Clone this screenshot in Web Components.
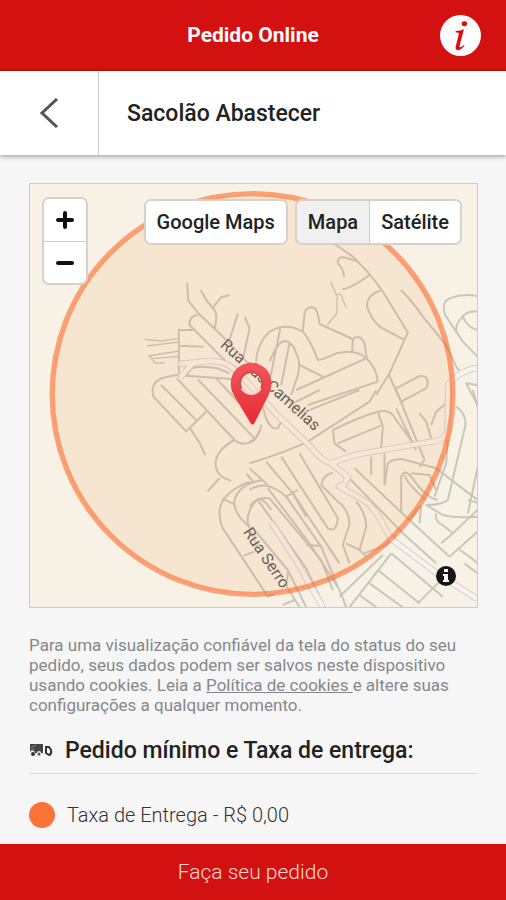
<!DOCTYPE html>
<html lang="pt-BR">
<head>
<meta charset="utf-8">
<meta name="viewport" content="width=device-width, initial-scale=1">
<title>Pedido Online</title>
<style>
  body {
    margin: 0;
    background: #f6f6f6;
    color: #222;
    font-family: Roboto, "Liberation Sans", sans-serif;
  }
</style>
</head>
<body>
<order-page>
  <app-header slot="header">Pedido Online</app-header>
  <store-bar slot="header">Sacolão Abastecer</store-bar>
  <delivery-map></delivery-map>
  <cookie-note></cookie-note>
  <fee-section>
    <span slot="title">Pedido mínimo e Taxa de entrega:</span>
    <fee-item>Taxa de Entrega - R$ 0,00</fee-item>
  </fee-section>
  <order-button slot="footer">Faça seu pedido</order-button>
</order-page>

<script>
class BaseElement extends HTMLElement {
  constructor() {
    super();
    this.attachShadow({ mode: "open" });
  }

  connectedCallback() {
    this.shadowRoot.innerHTML = this.template();
  }
}

class OrderPage extends BaseElement {
  template() {
    return `
      <style>
        :host {
          display: flex;
          flex-direction: column;
          min-height: 100vh;
        }
        main {
          flex: 1;
          padding: 28px 28px 12px 29px;
        }
        footer {
          position: sticky;
          bottom: 0;
        }
      </style>
      <header><slot name="header"></slot></header>
      <main><slot></slot></main>
      <footer><slot name="footer"></slot></footer>
    `;
  }
}

class AppHeader extends BaseElement {
  template() {
    return `
      <style>
        :host {
          display: grid;
          grid-template-columns: 1fr auto 1fr;
          align-items: center;
          height: 70px;
          padding: 0 25px;
          background: #d31110;
          border-bottom: 1px solid #b00c0c;
          color: #fff;
        }
        h1 {
          grid-column: 2;
          margin: 0;
          font-size: 21px;
          font-weight: 700;
        }
        button {
          justify-self: end;
          display: block;
          padding: 0;
          border: 0;
          background: none;
          cursor: pointer;
        }
        svg {
          display: block;
        }
      </style>
      <h1><slot></slot></h1>
      <button type="button" aria-label="Informações">
        <svg width="41" height="41" viewBox="0 0 42 42">
          <circle cx="21" cy="21" r="21" fill="#fff"/>
          <ellipse cx="25" cy="9" rx="2.800" ry="2.500" fill="#d31110"/>
          <path d="M16 16.500q5-.5 8.500-2l-4.300 16.500q-.5 2.300.8 2 1.500-.5 3.400-2.300l.8.900q-3.600 4.300-6.600 4.400-3.400 0-2.500-3.800l3-11.700q.6-2.300-.9-2.500l-2.300-.2z" fill="#d31110"/>
        </svg>
      </button>
    `;
  }
}

class StoreBar extends BaseElement {
  template() {
    return `
      <style>
        :host {
          position: relative;
          display: flex;
          height: 84px;
          background: #fff;
          box-shadow: 0 2px 4px rgba(0, 0, 0, 0.3);
        }
        button {
          display: grid;
          place-items: center;
          width: 99px;
          padding: 0;
          border: 0;
          border-right: 1px solid #ccc;
          background: none;
          cursor: pointer;
        }
        h2 {
          align-self: center;
          margin: 0 28px;
          font-size: 23px;
          font-weight: 500;
        }
      </style>
      <button type="button" aria-label="Voltar">
        <svg width="20" height="30" viewBox="0 0 20 30">
          <path d="M18 1L3 15L18 29" fill="none" stroke="#555" stroke-width="3"/>
        </svg>
      </button>
      <h2><slot></slot></h2>
    `;
  }
}

class DeliveryMap extends BaseElement {
  template() {
    return `
      <style>
        :host {
          position: relative;
          display: block;
          height: 423px;
          overflow: hidden;
          border: 1px solid #ccc;
          background: #f7f2e5;
        }
        .streets {
          display: block;
          width: 100%;
          height: 100%;
        }
        .minor {
          fill: none;
          stroke: #c9c6be;
          stroke-width: 6;
          stroke-linejoin: round;
        }
        .casing, .avenue {
          fill: none;
          stroke: #d3cbc6;
          stroke-width: 19;
          stroke-linejoin: round;
        }
        .avenue {
          stroke: #f8f2f0;
          stroke-width: 14;
        }
        text {
          fill: #6b6054;
          stroke: #f6e6d6;
          stroke-width: 4;
          paint-order: stroke;
          font-size: 48px;
        }
        button {
          box-sizing: border-box;
          padding: 0 11px;
          border: 0;
          background: #fff;
          color: #222;
          font: 500 20px Roboto, "Liberation Sans", sans-serif;
          cursor: pointer;
        }
        .zoom, .group {
          display: flex;
          overflow: hidden;
          border: 2px solid #d6d1c9;
          border-radius: 7px;
        }
        .zoom {
          position: absolute;
          top: 13px;
          left: 12px;
          flex-direction: column;
        }
        .zoom button {
          display: grid;
          place-items: center;
          width: 42px;
          height: 42px;
          padding: 0;
        }
        .zoom button + button {
          border-top: 1px solid #ccc;
        }
        .types {
          position: absolute;
          top: 15px;
          right: 15px;
          display: flex;
          gap: 7px;
        }
        .group button {
          height: 42px;
        }
        .group button + button {
          border-left: 1px solid #ccc;
        }
        button[aria-pressed="true"] {
          background: #f0f0f0;
        }
        .about {
          position: absolute;
          right: 20px;
          bottom: 20px;
          padding: 0;
          background: none;
        }
        button svg {
          display: block;
        }
      </style>
      <svg class="streets" viewBox="0 0 1344 1269" preserveAspectRatio="xMidYMid slice">
        <defs>
          <linearGradient id="pin" x1="0" y1="0" x2="0" y2="1">
            <stop offset="0" stop-color="#f2575a"/>
            <stop offset="1" stop-color="#e62a32"/>
          </linearGradient>
          <!-- avenues are drawn twice: wide casing, then a light centre -->
          <g id="avenues">
            <path d="M452 580L485 543Q510 526 572 534Q600 538 640 580L740 690L845 790Q875 830 905 838L955 880L945 900L928 907L1005 950Q1035 970 1065 1030L1085 1065L1225 1170L1344 1245"/>
            <path d="M905 838Q960 815 1000 808L1200 774Q1250 770 1254 740L1257 600L1290 570L1325 555L1344 552"/>
            <path d="M725 1015L800 1130L880 1269"/>
            <path d="M448 540L500 535"/>
          </g>
        </defs>

        <!-- north west -->
        <g class="minor" transform="translate(330 228)">
          <path d="M143 68L146 122L175 158L255 235L340 325"/>
          <path d="M184 90L200 120L225 150Q235 165 226 205"/>
          <path d="M220 142L245 112L270 106"/>
          <path d="M175 165Q148 168 150 195L290 335"/>
          <path d="M160 210H118V350M120 257L192 260"/>
          <path d="M15 238L65 243L118 236M22 258L118 246M118 273L28 288L48 310L75 309M35 296L118 289" stroke-width="4"/>
          <path d="M295 160L270 240M316 170L330 205L312 290"/>
          <path d="M140 350L155 325Q175 315 235 325L270 340"/>
          <path d="M40 400Q35 370 65 355L110 345L285 358"/>
        </g>
        <g class="minor" transform="translate(-30 618)">
          <path d="M400 10L402 20L500 124L560 65"/>
          <path d="M425 -15L530 90M472 -35L645 150Q672 172 705 150L722 120"/>
          <path d="M535 -32L705 145M590 -35L660 40"/>
          <path d="M512 115L540 158L557 195"/>
          <path d="M645 150Q590 180 588 220Q588 260 635 272M600 264L564 305"/>
          <path d="M680 250L705 280M608 325L645 343M672 497L705 485"/>
        </g>

        <!-- north -->
        <g class="minor" transform="translate(660 -27)">
          <path d="M255 207L310 245L360 297L397 345L475 472L465 495L420 595L380 660"/>
          <path d="M283 307Q285 285 265 265Q262 245 285 247L320 258"/>
          <path d="M278 342Q300 343 360 300"/>
          <path d="M397 345Q350 360 353 395Q365 435 395 458L465 495"/>
          <path d="M243 320L263 365L262 415L233 450M262 360Q275 350 280 375L291 398" stroke-width="4"/>
          <path d="M20 560Q20 510 60 470Q110 440 160 470Q185 500 205 555Q220 555 260 535Q320 520 350 550Q380 575 385 620"/>
          <path d="M160 470L165 415Q170 395 190 397Q205 400 210 447L310 492L308 530"/>
          <path d="M310 492Q330 475 345 505L352 550"/>
          <path d="M92 462L60 620M60 560Q85 500 105 498Q130 500 140 535Q155 560 145 600L125 660M120 505L95 630"/>
          <path d="M150 570L220 605M140 645L350 550M175 690L385 620"/>
          <path d="M454 345Q490 380 520 425L590 510L620 575"/>
          <path d="M684 363Q640 355 600 370Q575 380 587 420L640 500L684 545"/>
          <path d="M684 410Q650 405 635 430Q615 450 622 475M640 425Q655 460 684 465"/>
          <path d="M418 600L460 690M440 640L510 603Q535 600 535 625L530 640L455 680"/>
          <path d="M620 575L640 600M684 630L650 625L684 690"/>
        </g>

        <!-- south and east -->
        <g class="minor" transform="translate(660 618)">
          <path d="M380 0L360 35L175 155Q100 190 0 220M95 0L130 45M130 40L210 0"/>
          <path d="M155 70L330 0"/>
          <path d="M440 0L525 210L510 230M440 55L500 180"/>
          <path d="M250 120Q330 80 385 65Q425 55 440 90L492 160"/>
          <path d="M250 120L255 160L290 185M265 160L395 107M385 65L400 110L395 175"/>
          <path d="M510 70L530 95L545 145M545 105L560 65L590 40"/>
          <path d="M365 200V255M405 190V285"/>
          <path d="M40 50Q55 120 85 115L95 95M0 155Q30 145 35 105"/>

          <path d="M0 300Q50 265 110 320L215 470L265 590"/>
          <path d="M0 350Q20 320 60 325L215 510L250 600"/>
          <path d="M50 215L130 310L270 520M0 235L55 285"/>
          <path d="M95 200L235 415Q260 430 265 385L150 190M110 320L145 300"/>
          <path d="M170 465L215 468M130 310L170 380"/>
          <path d="M215 285Q220 255 250 248M215 285L265 335Q300 360 300 405Q290 430 280 465L300 520"/>
          <path d="M320 335Q350 370 350 410L330 480L290 460M330 480L350 500"/>
          <path d="M315 235L480 390L600 500M300 265L455 425L560 520"/>
          <path d="M405 285L415 220Q430 205 460 208L560 235L684 330"/>
          <path d="M455 370V260Q465 235 485 260Q530 325 565 330M465 255Q475 285 530 330"/>
          <path d="M485 250L540 255L560 300M515 345L510 400"/>
          <path d="M620 50Q650 70 648 105L595 330Q575 345 530 345L580 375Q620 385 684 380"/>
          <path d="M595 150L590 220L555 320M684 235L655 370M655 330L684 338M684 50L670 0"/>
          <path d="M560 370Q555 395 580 405L610 430L575 460M610 430L684 360"/>
          <path d="M480 390L510 350M600 500L684 425M630 480L660 500L684 520"/>
          <path d="M645 520L684 550M505 640L570 575"/>
          <path d="M425 490L300 652M400 495L270 620M425 490L580 620M385 540L510 640M360 580L460 652M330 615L380 652"/>
          <path d="M345 490L410 465L440 435"/>
        </g>
        <g class="minor" transform="translate(510 918)">
          <path d="M150 -25Q60 10 60 70Q62 110 80 130L205 320L225 312"/>
          <path d="M150 110Q100 70 105 30Q120 -20 190 -30"/>
          <path d="M175 170L145 100Q140 60 175 28Q190 20 215 60"/>
          <path d="M175 30L260 150L320 235L375 351M165 120L265 240L320 351"/>
          <path d="M265 240L262 290L300 351M250 345L285 330"/>
          <path d="M205 -5L330 160L420 300L440 351"/>
        </g>

        <use href="#avenues" class="casing"/>
        <use href="#avenues" class="avenue"/>
        <circle cx="669" cy="630" r="601" fill="#f4731f" fill-opacity=".1" stroke="#ff6a2a" stroke-opacity=".6" stroke-width="16"/>

        <text transform="translate(570 486) rotate(42)">Rua das Camelias</text>
        <text transform="translate(640 1044) rotate(56)">Rua Serro</text>

        <path d="M663 717L613 634Q602 614 604 597A61 61 0 0 1 726 597Q726 614 717 634L675 717Q669 726 663 717zM665 567A31 31 0 1 0 665 629A31 31 0 1 0 665 567z" fill="url(#pin)" fill-rule="evenodd"/>
        <circle cx="665" cy="598" r="34" fill="none" stroke="#d9454a" stroke-width="5"/>
        <path d="M638 612A31 31 0 0 0 692 612" fill="none" stroke="#fbd5d2" stroke-width="10"/>
      </svg>

      <div class="zoom">
        <button type="button" aria-label="Aumentar zoom">
          <svg width="18" height="18" viewBox="0 0 18 18"><path d="M9 2V16M2 9H16" stroke="#111" stroke-width="4" stroke-linecap="round"/></svg>
        </button>
        <button type="button" aria-label="Diminuir zoom">
          <svg width="18" height="18" viewBox="0 0 18 18"><path d="M2 9H16" stroke="#111" stroke-width="4" stroke-linecap="round"/></svg>
        </button>
      </div>
      <div class="types">
        <div class="group"><button type="button">Google Maps</button></div>
        <div class="group">
          <button type="button" aria-pressed="true">Mapa</button>
          <button type="button" aria-pressed="false">Satélite</button>
        </div>
      </div>
      <button class="about" type="button" aria-label="Sobre o mapa">
        <svg width="22" height="22" viewBox="0 0 22 22">
          <circle cx="11" cy="11" r="10" fill="#161616"/>
          <path d="M9 4H13V7H9zM8 9H13V15H14V17H8V15H9V11H8z" fill="#fff"/>
        </svg>
      </button>
    `;
  }
}

class CookieNote extends BaseElement {
  template() {
    return `
      <style>
        :host {
          display: block;
          margin-top: 27px;
          color: #85888b;
          font-size: 17px;
          line-height: 20px;
        }
        p {
          margin: 0;
        }
        a {
          color: inherit;
        }
      </style>
      <p>Para uma visualização confiável da tela do status do seu pedido, seus dados podem ser salvos neste dispositivo usando cookies. Leia a <a href="#cookies">Política de cookies </a>e altere suas configurações a qualquer momento.</p>
    `;
  }
}

class FeeSection extends BaseElement {
  template() {
    return `
      <style>
        :host {
          display: block;
          margin-top: 16px;
        }
        h3 {
          display: flex;
          align-items: center;
          gap: 12px;
          height: 38px;
          margin: 0 0 28px;
          padding-bottom: 4px;
          border-bottom: 1px solid #d8d8d8;
          font-size: 23px;
          font-weight: 500;
        }
      </style>
      <h3>
        <svg width="24" height="14" viewBox="0 0 24 14">
          <path d="M1 1H14V10H12A2 2 0 0 0 8 10H6A2 2 0 0 0 1 10z" fill="#444"/>
          <path d="M2 5L7 2M1 8L5 6" stroke="#888" stroke-width="1"/>
          <circle cx="4" cy="11" r="2" fill="#333"/>
          <circle cx="10" cy="11" r="1.500" fill="#555"/>
          <path d="M17 4V10L20 12Q23 11 22 7L20 4z" fill="none" stroke="#333" stroke-width="2"/>
        </svg>
        <slot name="title"></slot>
      </h3>
      <slot></slot>
    `;
  }
}

class FeeItem extends BaseElement {
  template() {
    return `
      <style>
        :host {
          display: flex;
          align-items: center;
          gap: 12px;
          color: #333;
          font-size: 20px;
          font-weight: 300;
        }
        i {
          width: 26px;
          height: 26px;
          border-radius: 50%;
          background: #fc7337;
        }
      </style>
      <i></i>
      <span><slot></slot></span>
    `;
  }
}

class OrderButton extends BaseElement {
  template() {
    return `
      <style>
        :host {
          display: block;
        }
        button {
          display: block;
          width: 100%;
          height: 56px;
          padding: 0;
          border: 0;
          background: #d31110;
          color: #fbd9d5;
          font: 300 21px Roboto, "Liberation Sans", sans-serif;
          cursor: pointer;
        }
      </style>
      <button type="button"><slot></slot></button>
    `;
  }
}

customElements.define("order-page", OrderPage);
customElements.define("app-header", AppHeader);
customElements.define("store-bar", StoreBar);
customElements.define("delivery-map", DeliveryMap);
customElements.define("cookie-note", CookieNote);
customElements.define("fee-section", FeeSection);
customElements.define("fee-item", FeeItem);
customElements.define("order-button", OrderButton);
</script>
</body>
</html>
